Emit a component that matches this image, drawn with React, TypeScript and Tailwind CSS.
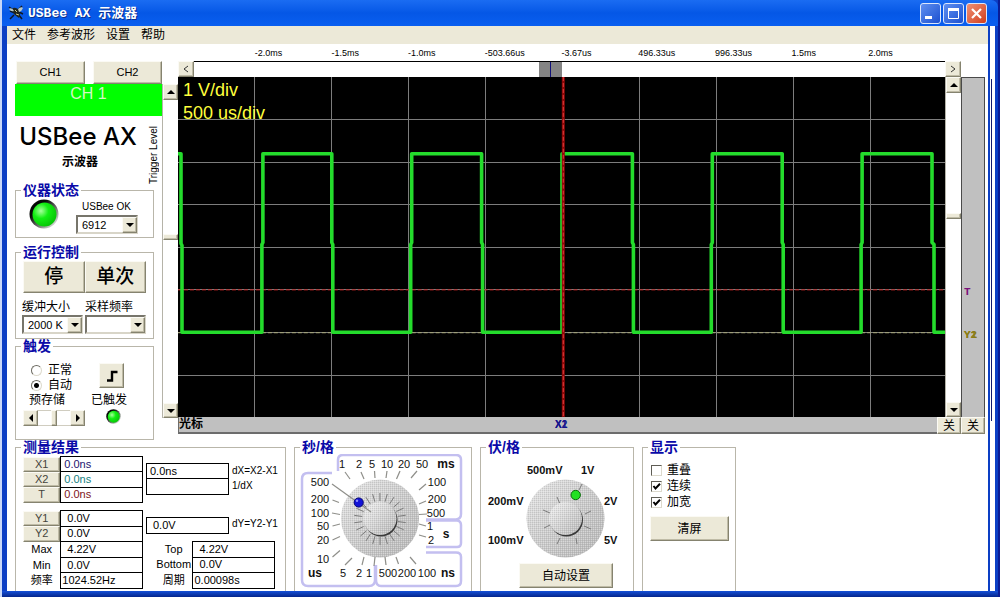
import React from "react";

const SANS = "font-['Liberation_Sans','Noto_Sans_CJK_SC',sans-serif]";
const RAISED =
  "border border-t-[#fbfaf4] border-l-[#fbfaf4] border-r-[#85836f] border-b-[#85836f] bg-[#ece9d8] shadow-[inset_-1px_-1px_0_#bfbba6]";

function Group({
  title,
  className,
  children,
}: {
  title: string;
  className: string;
  children: React.ReactNode;
}) {
  return (
    <fieldset className={`border border-[#b9b6aa] ${className}`}>
      <legend className="ml-[5px] px-[2px] text-[14px] leading-[14px] font-bold whitespace-nowrap text-[#0a0aa8]">
        {title}
      </legend>
      {children}
    </fieldset>
  );
}

function Arrow({ dir }: { dir: "up" | "down" | "left" | "right" }) {
  const shape = {
    up: "0,6 4,2 8,6",
    down: "0,2 4,6 8,2",
    left: "6,0 2,4 6,8",
    right: "2,0 6,4 2,8",
  }[dir];
  return (
    <svg viewBox="0 0 8 8" className="h-2 w-2 shrink-0" aria-hidden="true">
      <polygon points={shape} fill="#000" />
    </svg>
  );
}

function Combo({ label, options, className }: { label: string; options: string[]; className: string }) {
  return (
    <div className={`relative h-[19px] ${className}`}>
      <select
        aria-label={label}
        className="block h-full w-full appearance-none rounded-none border-2 border-t-[#77756b] border-l-[#77756b] border-r-[#d8d5c8] border-b-[#d8d5c8] bg-white pl-[4px] text-[11px] leading-[14px] text-black"
      >
        {options.map((o) => (
          <option key={o}>{o}</option>
        ))}
      </select>
      <span
        className={`pointer-events-none absolute top-[2px] right-[1px] bottom-[1px] flex w-[15px] items-center justify-center ${RAISED}`}
      >
        <Arrow dir="down" />
      </span>
    </div>
  );
}

function VSlider({ label, upper, className }: { label: string; upper: string; className: string }) {
  return (
    <div className={`flex w-[16px] shrink-0 flex-col border-l border-[#b5b3a8] bg-white ${className}`}>
      <button aria-label={`${label} up`} className={`flex h-[16px] items-center justify-center ${RAISED}`}>
        <Arrow dir="up" />
      </button>
      <div className={upper} />
      <div className={`h-[6px] ${RAISED}`} />
      <div className="flex-1" />
      <button aria-label={`${label} down`} className={`flex h-[15px] items-center justify-center ${RAISED}`}>
        <Arrow dir="down" />
      </button>
    </div>
  );
}

function Led({ className }: { className: string }) {
  return (
    <svg viewBox="0 0 30 30" className={className} aria-hidden="true">
      <defs>
        <linearGradient id="ledRim" x1="0" y1="0" x2="1" y2="1">
          <stop offset="0.3" stopColor="#050805" />
          <stop offset="0.65" stopColor="#7d857d" />
          <stop offset="0.9" stopColor="#e4e8e4" />
        </linearGradient>
        <radialGradient id="ledLens" cx="0.35" cy="0.35" r="0.7">
          <stop offset="0" stopColor="#a8ff9c" />
          <stop offset="0.45" stopColor="#12ef12" />
          <stop offset="1" stopColor="#06c406" />
        </radialGradient>
      </defs>
      <circle cx="15" cy="15" r="14.5" fill="url(#ledRim)" />
      <circle cx="15.5" cy="15.5" r="12" fill="url(#ledLens)" />
    </svg>
  );
}

type Tick = [number, number, number, number];

function KnobDefs() {
  return (
    <defs>
      <linearGradient id="knobFace" x1="0" y1="0" x2="1" y2="1">
        <stop offset="0" stopColor="#e6e6e6" />
        <stop offset="0.5" stopColor="#cacaca" />
        <stop offset="1" stopColor="#b4b4b4" />
      </linearGradient>
      <linearGradient id="knobCap" x1="0" y1="0" x2="1" y2="1">
        <stop offset="0" stopColor="#f0f0f0" />
        <stop offset="1" stopColor="#b4b4b4" />
      </linearGradient>
      <pattern id="grain" width="2" height="2" patternUnits="userSpaceOnUse">
        <rect width="1" height="1" fill="#8d8d8d" opacity="0.25" />
        <rect x="1" y="1" width="1" height="1" fill="#fff" opacity="0.35" />
      </pattern>
    </defs>
  );
}

function Knob({ cx, cy, spokes }: { cx: number; cy: number; spokes: Tick[] }) {
  return (
    <g>
      <circle cx={cx} cy={cy} r="39" fill="url(#knobFace)" />
      <circle cx={cx} cy={cy} r="39" fill="url(#grain)" />
      {spokes.map(([x1, y1, x2, y2]) => (
        <line key={`${x1},${y1}`} x1={x1} y1={y1} x2={x2} y2={y2} stroke="#7c7c7c" />
      ))}
      <circle cx={cx + 1} cy={cy + 1.5} r="16.5" fill="#3a3a3a" />
      <circle cx={cx} cy={cy} r="16.5" fill="url(#knobCap)" />
      <circle cx={cx} cy={cy} r="16.5" fill="url(#grain)" />
    </g>
  );
}

const TIME_TICKS: Tick[] = [
  [345, 472, 350, 479], [361, 472, 364, 479], [374.5, 471, 375, 478], [387, 471, 386, 478],
  [400, 471, 396.5, 479], [417, 471, 411, 478], [426, 484, 419, 490], [426, 501, 419, 504],
  [427, 514, 419, 514.5], [426, 526, 419, 524], [426, 537, 419, 535], [332.5, 500, 339, 502.5],
  [332, 513, 340, 514.5], [332.5, 526, 340, 524], [332.5, 540, 340, 536.5], [332.5, 557, 340, 550.5],
  [345, 565, 352, 558], [362, 565, 364, 557], [374, 566, 375, 557], [386, 565, 385, 557],
  [398.5, 564, 396, 557], [416, 564, 410, 557],
];

const TIME_LABELS: [string, number, number, boolean?][] = [
  ["1", 342, 464], ["2", 359, 464], ["5", 372, 464], ["10", 387, 464], ["20", 404, 464], ["50", 422, 464],
  ["ms", 446, 464, true], ["500", 320, 482], ["200", 320, 499], ["100", 320, 513], ["50", 323, 526],
  ["20", 323, 540], ["10", 323, 559], ["us", 315, 573, true], ["5", 343, 573], ["2", 359, 573], ["1", 369, 573],
  ["500", 388, 573], ["200", 407, 573], ["100", 427, 573], ["ns", 448, 573, true], ["100", 437, 482],
  ["200", 437, 499], ["500", 436, 513], ["1", 430, 526], ["2", 431, 540], ["s", 446, 534, true],
];

const TIME_SPOKES: Tick[] = Array.from({ length: 22 }, (_, i) => {
  const a = (i * Math.PI * 2) / 22 + 0.14;
  return [380 + 18 * Math.cos(a), 519 + 18 * Math.sin(a), 380 + 26 * Math.cos(a), 519 + 26 * Math.sin(a)];
});

function TimeKnob() {
  return (
    <svg
      viewBox="296 454 174 135"
      className="mx-auto block h-[135px] w-[174px] font-['Liberation_Sans',sans-serif] text-[11px]"
      role="img"
      aria-label="秒/格"
    >
      <KnobDefs />
      <g fill="none" stroke="#c3bff0" strokeWidth="2.5">
        <path d="M338 471V460Q338 455 343 455H456Q461 455 461 460V514Q461 519 456 519.500H426" />
        <path d="M426 520.500H457Q461 521 461 525V543Q461 547 457 547H426" />
        <path d="M426 552.500H456Q461 552.500 461 557V581Q461 586 456 586H381Q376 586 376 580V565" />
        <path d="M332 473H308Q302 473 302 479V580Q302 586 308 586H369Q375 586 375 580V565" />
      </g>
      <Knob cx={380} cy={518.5} spokes={TIME_SPOKES} />
      <g stroke="#8f8f8a" strokeWidth="1.2">
        {TIME_TICKS.map(([x1, y1, x2, y2]) => (
          <line key={`${x1},${y1}`} x1={x1} y1={y1} x2={x2} y2={y2} />
        ))}
        <line x1="332" y1="484" x2="371" y2="512" />
      </g>
      <circle cx="358.700" cy="502.500" r="4.600" fill="#1212d8" stroke="#04046e" />
      <circle cx="357" cy="500.800" r="1.200" fill="#8d8dff" />
      {TIME_LABELS.map(([t, x, y, bold]) => (
        <text
          key={`${t}-${x}-${y}`}
          x={x}
          y={y + 4}
          textAnchor="middle"
          fill="#111"
          className={bold ? "text-[12px] font-bold" : ""}
        >
          {t}
        </text>
      ))}
    </svg>
  );
}

const VOLT_SPOKES: Tick[] = [
  [557, 497, 560, 504], [543, 510, 550, 513], [544, 528, 550, 525], [557, 544, 560, 538],
  [582, 484, 579, 490], [585, 514, 591, 511], [584, 526, 591, 529], [576, 538, 577, 544],
];

const VOLT_LABELS: [string, number, number][] = [
  ["500mV", 527, 470], ["1V", 581, 470], ["200mV", 488, 501], ["2V", 604, 501], ["100mV", 488, 540], ["5V", 604, 540],
];

function VoltKnob() {
  return (
    <svg
      viewBox="482 454 151 109"
      className="mx-auto block h-[109px] w-[151px] font-['Liberation_Sans',sans-serif] text-[11px] font-bold"
      role="img"
      aria-label="伏/格"
    >
      <Knob cx={565.5} cy={518.5} spokes={VOLT_SPOKES} />
      <circle cx="575.700" cy="495" r="4.700" fill="#22e022" stroke="#0b6b0b" />
      {VOLT_LABELS.map(([t, x, y]) => (
        <text key={t} x={x} y={y + 4} fill="#111">
          {t}
        </text>
      ))}
    </svg>
  );
}

function Plot() {
  const cols = [1, 2, 3, 4, 5, 6, 7, 8, 9];
  const rows = [1, 2, 3, 4, 5, 6, 7];
  return (
    <svg viewBox="0 0 768 341" preserveAspectRatio="none" className="block h-full w-full" role="img" aria-label="CH 1">
      <rect width="768" height="341" fill="#000" />
      <g stroke="#7d7d7d" strokeWidth="1" shapeRendering="crispEdges">
        {cols.map((c) => (
          <line key={c} x1={c * 77} x2={c * 77} y1="0" y2="341" />
        ))}
        {rows.map((r) => (
          <line key={r} x1="0" x2="768" y1={r * 42.7} y2={r * 42.7} />
        ))}
      </g>
      <line x1="0" x2="768" y1="213.500" y2="213.500" stroke="#c02020" strokeDasharray="4 2" />
      <line x1="0" x2="768" y1="256.500" y2="256.500" stroke="#a8a878" strokeDasharray="4 2" />
      <path
        d="M0 77H3V167L4 169V256H84V168L85 166V77H154V166L155 168V256H233V168L234 166V77H304V166L305 168V256H384.500V77H455V166L456 168V256H534V168L535 166V77H605V166L606 168V256H684V168L685 166V77H755V166L757 168V256H768"
        fill="none"
        stroke="#24dc2c"
        strokeWidth="3.600"
        strokeLinejoin="round"
      />
      <line x1="385.800" x2="385.800" y1="0" y2="341" stroke="#8c0808" strokeWidth="3" />
      <line x1="385.800" x2="385.800" y1="0" y2="341" stroke="#e03c3c" strokeDasharray="4 2" />
    </svg>
  );
}

function Readout({
  rows,
  className,
}: {
  rows: { name: string; value: string; button?: boolean; tone?: string; pad?: string }[];
  className: string;
}) {
  return (
    <table className={`border-collapse text-[11px] leading-[11px] ${className}`}>
      <tbody>
        {rows.map((r) => (
          <tr key={r.name}>
            <th scope="row" className="h-[15px] w-[38px] p-0 text-center font-normal whitespace-nowrap">
              {r.button ? (
                <button className={`block h-full w-full leading-[11px] text-[#44443c] ${RAISED}`}>{r.name}</button>
              ) : (
                r.name
              )}
            </th>
            <td
              className={`h-[15px] w-[82px] border border-black bg-white py-0 ${r.pad ?? "px-[3px]"} ${r.tone ?? "text-black"}`}
            >
              {r.value}
            </td>
          </tr>
        ))}
      </tbody>
    </table>
  );
}

function Check({ label, checked }: { label: string; checked: boolean }) {
  return (
    <label className="flex h-[16px] items-center gap-[5px] text-[12px] leading-[16px]">
      <span className="relative flex h-[11px] w-[11px]">
        <input
          type="checkbox"
          defaultChecked={checked}
          className="peer h-[11px] w-[11px] appearance-none border border-t-[#5f5d55] border-l-[#5f5d55] border-r-[#dcd9cc] border-b-[#dcd9cc] bg-white"
        />
        <svg
          viewBox="0 0 11 11"
          className="pointer-events-none absolute inset-0 hidden h-[11px] w-[11px] peer-checked:block"
          aria-hidden="true"
        >
          <path d="M2.500 5L4.500 7.500L9 2.800" fill="none" stroke="#000" strokeWidth="2" />
        </svg>
      </span>
      {label}
    </label>
  );
}

function Radio({ label, checked }: { label: string; checked: boolean }) {
  return (
    <label className="flex h-[15px] items-center gap-[6px] text-[12px] leading-[15px]">
      <input
        type="radio"
        name="trigger-mode"
        defaultChecked={checked}
        className="h-[11px] w-[11px] appearance-none rounded-full border border-t-[#6d6b62] border-l-[#6d6b62] border-r-[#dcd9cc] border-b-[#dcd9cc] bg-white checked:bg-[radial-gradient(circle,#000_2px,#fff_3px)]"
      />
      {label}
    </label>
  );
}

function TitleBar() {
  const base = "flex h-[21px] w-[21px] items-center justify-center rounded-[3px] border border-[#dbe6fb]";
  return (
    <header className="flex h-[26px] shrink-0 items-center rounded-tr-[7px] bg-linear-to-b from-[#1a6cf2] via-[#0557e6] to-[#0a5ff0] pr-[11px] pl-[6px]">
      <svg viewBox="0 0 16 16" className="h-[16px] w-[16px]" aria-hidden="true">
        <g stroke="#101820" strokeWidth="1.500" fill="none">
          <path d="M1 2L7 6M14 1L9 6M2 6L7 8M10 9L14 14M6 10L2 14M11 7L15 9" />
        </g>
        <path d="M5 3Q9 2 11 6Q13 10 11 13Q8 11 6 9Q4 6 5 3Z" fill="#20261f" />
        <path d="M1 4Q4 2 6 6Q3 7 1 4ZM10 4Q13 1 15 3Q14 6 11 7Z" fill="#b9c8c4" />
        <path d="M7 5L9 7M8 9L11 10" stroke="#c8c88c" />
      </svg>
      <h1 className="ml-[4px] flex-1 pt-[2px] font-['Liberation_Mono','Noto_Sans_CJK_SC',monospace] text-[13px] leading-[20px] font-bold text-white [text-shadow:1px_1px_0_#0a2f8f]">
        USBee AX 示波器
      </h1>
      <div className="flex gap-[2px]">
        <button aria-label="最小化" className={`${base} bg-linear-to-br from-[#5f8ff0] to-[#1c4fd0]`}>
          <svg viewBox="0 0 19 19" className="h-[19px] w-[19px]">
            <rect x="4" y="12" width="7" height="3" fill="#fff" />
          </svg>
        </button>
        <button aria-label="最大化" className={`${base} bg-linear-to-br from-[#5f8ff0] to-[#1c4fd0]`}>
          <svg viewBox="0 0 19 19" className="h-[19px] w-[19px]">
            <path d="M4.500 5V14.500H14.500V5" fill="none" stroke="#fff" />
            <rect x="4" y="4" width="11" height="3" fill="#fff" />
          </svg>
        </button>
        <button aria-label="关闭" className={`${base} bg-linear-to-br from-[#ee8f74] to-[#d13a14]`}>
          <svg viewBox="0 0 19 19" className="h-[19px] w-[19px]">
            <path d="M5 5L14 14M14 5L5 14" stroke="#fff" strokeWidth="2.200" />
          </svg>
        </button>
      </div>
    </header>
  );
}

function ControlPanel() {
  return (
    <div className="w-[163px] shrink-0 pt-[17px]">
      <div className="flex h-[23px] w-[147px] gap-[8px] pl-px text-[11px]">
        <button className={`flex-1 ${RAISED}`}>CH1</button>
        <button className={`flex-1 ${RAISED}`}>CH2</button>
      </div>
      <div className="flex items-start">
        <div className="w-[147px]">
          <div className="h-[32px] bg-[#00ff00] text-center text-[16px] leading-[20px] text-[#d4f7c4]">CH 1</div>
          <div className="flex h-[67px] justify-between">
            <div className="w-[126px] pt-[8px] text-center">
              <div className="font-['Inter',sans-serif] text-[24px] leading-[26px] font-medium whitespace-nowrap">
                USBee AX
              </div>
              <div className="pt-[4px] pl-[4px] text-[12px] leading-[16px] font-bold">示波器</div>
            </div>
            <div className="mt-[8px] mr-[2px] h-[62px] rotate-180 text-center text-[10px] leading-[12px] whitespace-nowrap [writing-mode:vertical-rl]">
              Trigger Level
            </div>
          </div>
          <Group title="仪器状态" className="h-[55px] w-[139px]">
            <div className="flex gap-[17px] pl-[13px]">
              <Led className="mt-[2px] h-[30px] w-[30px]" />
              <div>
                <div className="pt-[3px] pl-[6px] text-[10px] leading-[13px]">USBee OK</div>
                <Combo label="USBee" options={["6912"]} className="mt-[2px] w-[62px]" />
              </div>
            </div>
          </Group>
          <Group title="运行控制" className="mt-[7px] h-[94px] w-[139px]">
            <div className="mt-[2px] flex h-[32px] px-[7px] text-[19px] leading-[24px] font-medium">
              <button className={`flex-1 ${RAISED}`}>停</button>
              <button className={`flex-1 ${RAISED}`}>单次</button>
            </div>
            <div className="mt-[6px] grid grid-cols-2 gap-x-[2px] pr-[7px] pl-[6px] text-[12px] leading-[16px] whitespace-nowrap">
              <div>缓冲大小</div>
              <div>采样频率</div>
              <Combo label="缓冲大小" options={["2000 K"]} className="w-full" />
              <Combo label="采样频率" options={[""]} className="w-full" />
            </div>
          </Group>
          <Group title="触发" className="h-[101px] w-[139px]">
            <div className="flex justify-between pr-[26px] pl-[7px]">
              <div className="pt-[10px]">
                <div className="pl-[8px]">
                  <Radio label="正常" checked={false} />
                  <Radio label="自动" checked={true} />
                </div>
                <div className="pl-[6px] text-[12px] leading-[15px]">预存储</div>
                <div className="mt-[2px] flex h-[16px] w-[62px] bg-white">
                  <button aria-label="预存储减少" className={`flex w-[15px] items-center justify-center ${RAISED}`}>
                    <Arrow dir="left" />
                  </button>
                  <div className="flex-1 border-y border-[#d0cdc0]" />
                  <div className={`w-[6px] ${RAISED}`} />
                  <div className="flex-1 border-y border-[#d0cdc0]" />
                  <button aria-label="预存储增加" className={`flex w-[15px] items-center justify-center ${RAISED}`}>
                    <Arrow dir="right" />
                  </button>
                </div>
              </div>
              <div className="flex flex-col items-center pt-[10px]">
                <button
                  aria-label="上升沿触发"
                  className={`ml-[6px] flex h-[25px] w-[25px] items-center justify-center ${RAISED}`}
                >
                  <svg viewBox="0 0 12 12" className="h-[12px] w-[12px]">
                    <path d="M1 10.500H6V2H11.500" fill="none" stroke="#000" strokeWidth="2.400" />
                  </svg>
                </button>
                <div className="mt-[5px] text-[12px] leading-[15px] whitespace-nowrap">已触发</div>
                <Led className="mt-px ml-[10px] h-[15px] w-[15px]" />
              </div>
            </div>
          </Group>
        </div>
        <VSlider label="Trigger Level" upper="h-[134px]" className="h-[334px]" />
      </div>
    </div>
  );
}

const TIMES = ["-2.0ms", "-1.5ms", "-1.0ms", "-503.66us", "-3.67us", "496.33us", "996.33us", "1.5ms", "2.0ms"];

function Scope() {
  return (
    <section className="min-w-0 flex-1">
      <div className="mr-[40px] grid h-[17px] grid-cols-10 text-[9px] leading-[18px] whitespace-nowrap">
        <span />
        {TIMES.map((t) => (
          <span key={t}>{t}</span>
        ))}
      </div>
      <div className="mr-[24px] flex h-[16px]">
        <button aria-label="向左" className={`flex w-[16px] items-center justify-center ${RAISED}`}>
          <svg viewBox="0 0 8 8" className="h-[8px] w-[8px]">
            <path d="M6 1L2 4L6 7" fill="none" stroke="#333" />
          </svg>
        </button>
        <div className="flex flex-1 border-t border-black bg-white">
          <div className="w-[46%]" />
          <div className="flex w-[23px] justify-center bg-[#848484]">
            <div className="w-px bg-[#101078]" />
          </div>
        </div>
        <button aria-label="向右" className={`flex w-[16px] items-center justify-center ${RAISED}`}>
          <svg viewBox="0 0 8 8" className="h-[8px] w-[8px]">
            <path d="M2 1L6 4L2 7" fill="none" stroke="#333" />
          </svg>
        </button>
      </div>
      <div className="flex h-[340px]">
        <div className="relative min-w-0 flex-1">
          <Plot />
          <div className="absolute top-[2px] left-[5px] text-[18px] leading-[23px] text-[#ffff3c]">
            <div>1 V/div</div>
            <div>500 us/div</div>
          </div>
        </div>
        <VSlider label="纵向位置" upper="h-[120px]" className="" />
        <div className="relative w-[24px] border border-b-0 border-[#4a4a4a] bg-[#c0c0c0] font-['Liberation_Mono',monospace] text-[11px] leading-[12px] font-bold">
          <span className="absolute top-[208px] left-[2px] text-[#7a107a]">T</span>
          <span className="absolute top-[251px] left-[2px] text-[#8a7c14]">Y1</span>
          <span className="absolute top-[251px] left-[2px] text-[#8a7c14]">Y2</span>
        </div>
      </div>
      <div className="flex h-[17px] text-[12px] leading-[14px]">
        <div className="relative flex-1 border-b-2 border-l border-[#6c6c6c] bg-[#c0c0c0]">
          <span className="font-bold">光标</span>
          <span className="absolute top-[1px] left-[calc(50%-3px)] text-[10px] font-bold text-[#14148c]">X1</span>
          <span className="absolute top-[1px] left-[calc(50%-3px)] text-[10px] font-bold text-[#14148c]">X2</span>
        </div>
        <button className={`w-[24px] ${RAISED}`}>关</button>
        <button className={`w-[24px] ${RAISED}`}>关</button>
      </div>
    </section>
  );
}

function Measurements() {
  return (
    <Group title="测量结果" className="h-[151px] w-[271px] border-b-0">
      <div className="flex gap-[3px] pt-[2px] pl-[7px]">
        <div className="w-[120px]">
          <Readout
            className="h-[47px] w-full"
            rows={[
              { name: "X1", value: "0.0ns", button: true, tone: "text-[#23146e]" },
              { name: "X2", value: "0.0ns", button: true, tone: "text-[#158080]" },
              { name: "T", value: "0.0ns", button: true, tone: "text-[#7d1420]" },
            ]}
          />
          <Readout
            className="mt-[7px] h-[79px] w-full"
            rows={[
              { name: "Y1", value: "0.0V", button: true, pad: "px-[6px]" },
              { name: "Y2", value: "0.0V", button: true, pad: "px-[6px]" },
              { name: "Max", value: "4.22V", pad: "px-[6px]" },
              { name: "Min", value: "0.0V", pad: "px-[6px]" },
              { name: "频率", value: "1024.52Hz", pad: "px-px" },
            ]}
          />
        </div>
        <div className="pt-[7px] text-[11px] leading-[15px]">
          <div className="flex gap-[3px]">
            <div className="w-[83px] border border-black">
              <output className="block h-[15px] border-b border-black pl-[3px]">0.0ns</output>
              <output className="block h-[15px]" />
            </div>
            <div className="text-[10px] leading-[15px] whitespace-nowrap">
              <div>dX=X2-X1</div>
              <div>1/dX</div>
            </div>
          </div>
          <div className="mt-[22px] flex h-[17px] gap-[3px]">
            <output className="w-[83px] border border-black pl-[6px]">0.0V</output>
            <div className="text-[10px] leading-[14px] whitespace-nowrap">dY=Y2-Y1</div>
          </div>
          <Readout
            className="mt-[7px] ml-[9px] h-[48px] w-[120px]"
            rows={[
              { name: "Top", value: "4.22V", pad: "px-[6px]" },
              { name: "Bottom", value: "0.0V", pad: "px-[6px]" },
              { name: "周期", value: "0.00098s", pad: "px-px" },
            ]}
          />
        </div>
      </div>
    </Group>
  );
}

export default function App() {
  return (
    <div className={`flex min-h-screen bg-[#0a1c96] text-black ${SANS}`}>
      <div className="w-[2px] shrink-0 bg-[#c9d8f8]" />
      <div className="flex min-w-0 flex-1 flex-col bg-[#0c3fc4]">
        <TitleBar />
        <div className="flex flex-1 pl-[5px]">
          <main className="flex min-w-0 flex-1 flex-col bg-white">
            <nav className="flex h-[18px] gap-[11px] bg-[#ece9d8] pl-[5px] text-[12px] leading-[18px]">
              <button>文件</button>
              <button>参考波形</button>
              <button>设置</button>
              <button>帮助</button>
            </nav>
            <div className="flex pr-[3px] pl-[8px]">
              <ControlPanel />
              <Scope />
            </div>
            <div className="flex gap-[8px] pl-[8px]">
              <Measurements />
              <Group title="秒/格" className="h-[151px] w-[178px] border-b-0">
                <TimeKnob />
              </Group>
              <Group title="伏/格" className="h-[151px] w-[154px] border-b-0">
                <VoltKnob />
                <button className={`ml-[38px] block h-[25px] w-[94px] text-[12px] leading-[20px] ${RAISED}`}>
                  自动设置
                </button>
              </Group>
              <Group title="显示" className="h-[151px] w-[94px] border-b-0">
                <div className="pt-[8px] pl-[8px]">
                  <Check label="重叠" checked={false} />
                  <Check label="连续" checked={true} />
                  <Check label="加宽" checked={true} />
                </div>
                <button className={`mt-[6px] ml-[7px] block h-[25px] w-[79px] text-[12px] leading-[20px] ${RAISED}`}>
                  清屏
                </button>
              </Group>
            </div>
          </main>
          <div className="w-[2px] shrink-0 bg-[#0c3fc4]" />
          <div className="w-[5px] shrink-0 bg-white pt-[53px]">
            <div className="h-[342px] w-[2px] border-r border-[#10186c]" />
          </div>
          <div className="w-[3px] shrink-0 bg-[#0c3fc4]" />
        </div>
        <div className="h-[6px] shrink-0 bg-linear-to-b from-[#1550d8] to-[#06268c]" />
      </div>
      <div className="w-[2px] shrink-0" />
    </div>
  );
}
